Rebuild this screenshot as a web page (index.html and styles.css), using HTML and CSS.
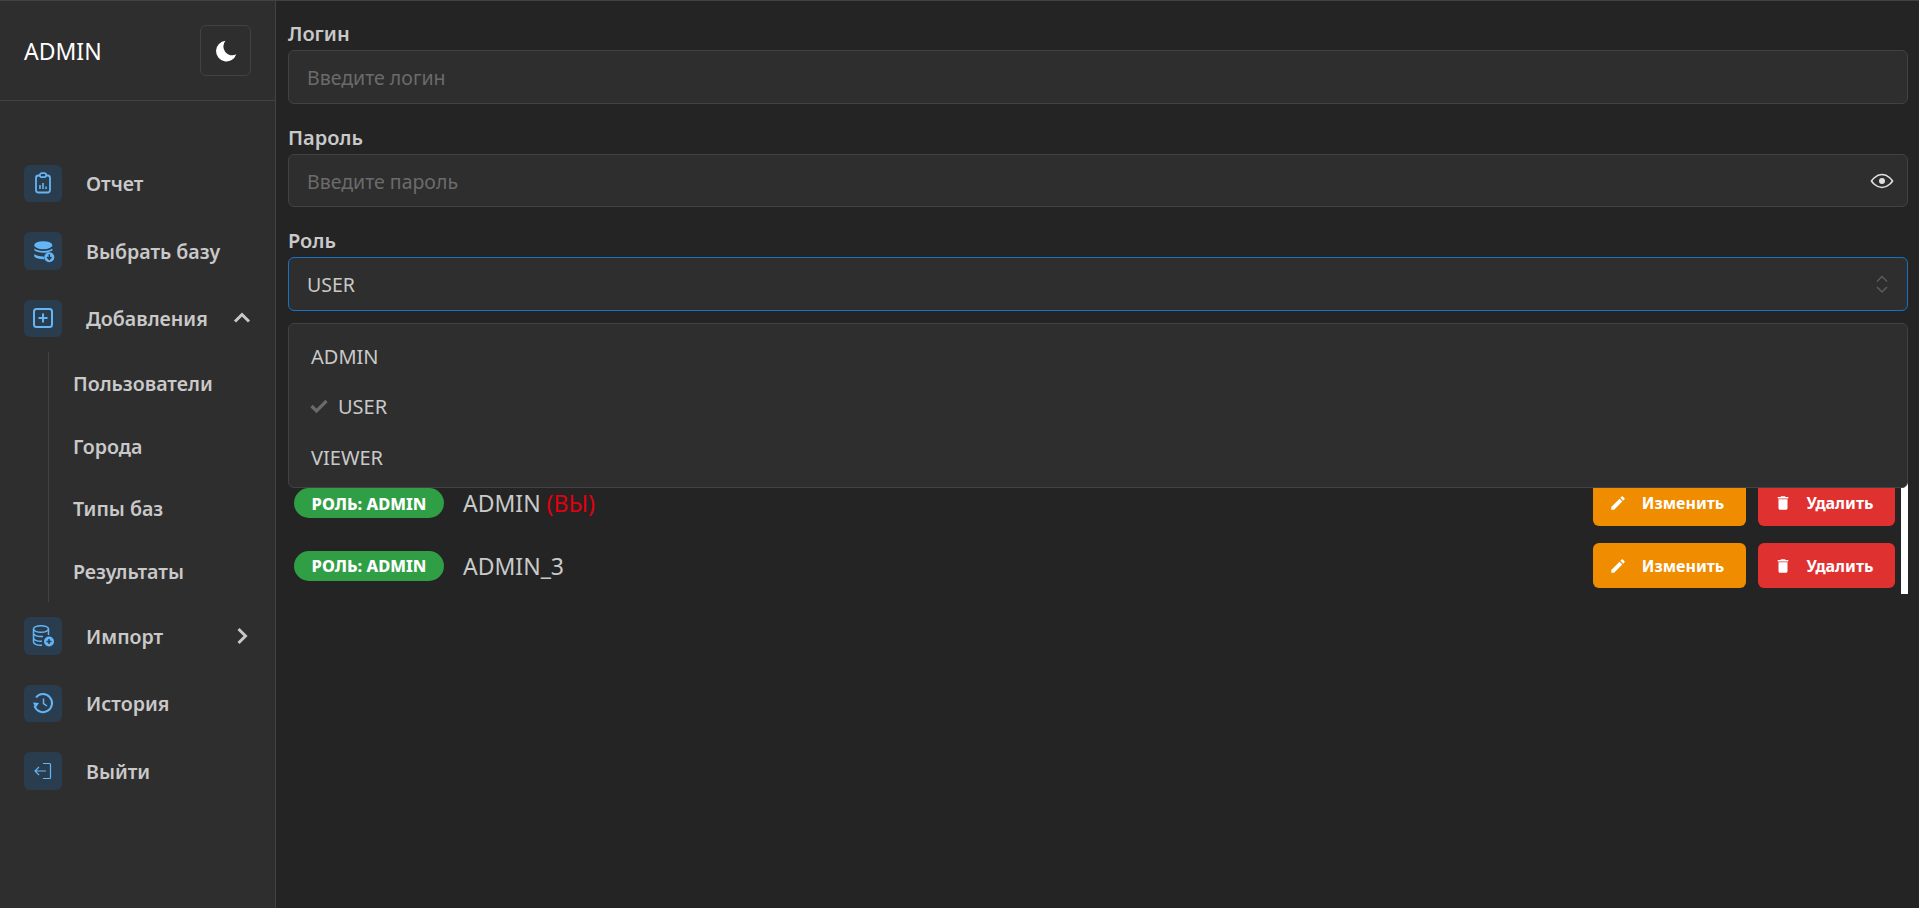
FILE: index.html
```html
<!DOCTYPE html>
<html lang="ru">
<head>
  <meta charset="UTF-8">
  <meta name="viewport" content="width=device-width, initial-scale=1.0">
  <title>Пользователи</title>
  <link rel="stylesheet" href="styles.css">
</head>
<body>
  <aside class="sidebar">
    <div class="sidebar-head">
      <span class="brand">ADMIN</span>
      <button class="theme-btn" aria-label="Тема">
        <svg width="26" height="26" viewBox="0 0 24 24" fill="#fff"><path d="M11.500 2.500a9.600 9.600 0 1 0 10 12.600 8.200 8.200 0 0 1-10-12.600z"/></svg>
      </button>
    </div>

    <nav class="nav">
      <a class="nav-item">
        <span class="nav-icon">
          <svg width="24" height="24" viewBox="0 0 24 24" fill="none" stroke="#64b5f6" stroke-width="1.800" stroke-linejoin="round"><rect x="5" y="4.500" width="14" height="17" rx="2.500"/><rect x="8.800" y="2.200" width="6.400" height="4" rx="2" fill="#2a3d4f"/><path d="M9 18v-4M12 18v-6M15 18v-2.500" stroke-width="1.600"/></svg>
        </span>
        <span class="nav-text">Отчет</span>
      </a>
      <a class="nav-item">
        <span class="nav-icon">
          <svg width="24" height="24" viewBox="0 0 24 24" fill="#64b5f6"><ellipse cx="12.300" cy="6.200" rx="9" ry="4"/><path d="M3.300 9.500c1.600 1.600 5 2.500 9 2.500s7.400-.9 9-2.500v2.200a7 7 0 0 0-4 1.500c-1.500.4-3.200.6-5 .6-4 0-7.400-1-9-2.500z"/><path d="M3.300 15c1.600 1.500 5 2.500 9 2.500h.4c.1 1 .4 1.900.9 2.700l-1.300.1c-4 0-7.400-1-9-2.700z"/><circle cx="18.300" cy="18.200" r="5"/><path d="M18.300 15.200v5M16.100 18l2.200 2.300 2.200-2.300" fill="none" stroke="#2a3d4f" stroke-width="1.500"/></svg>
        </span>
        <span class="nav-text">Выбрать базу</span>
      </a>
      <a class="nav-item">
        <span class="nav-icon">
          <svg width="24" height="24" viewBox="0 0 24 24" fill="none" stroke="#64b5f6" stroke-width="2"><rect x="3" y="3" width="18" height="18" rx="2.500"/><path d="M12 7.500v9M7.500 12h9"/></svg>
        </span>
        <span class="nav-text">Добавления</span>
        <svg class="nav-arrow" width="18" height="18" viewBox="0 0 18 18" fill="none" stroke="#c8c8c8" stroke-width="3"><path d="M2 12.500l7-7 7 7"/></svg>
      </a>
      <div class="subnav">
        <a class="subnav-item">Пользователи</a>
        <a class="subnav-item">Города</a>
        <a class="subnav-item">Типы баз</a>
        <a class="subnav-item">Результаты</a>
      </div>
      <a class="nav-item">
        <span class="nav-icon">
          <svg width="24" height="24" viewBox="0 0 24 24" fill="none" stroke="#64b5f6" stroke-width="1.500"><ellipse cx="10" cy="5" rx="7.500" ry="3.300"/><path d="M2.500 5v13c0 1.800 3.400 3.300 7.500 3.300h1M17.500 5v6M2.500 9.300c0 1.800 3.400 3.300 7.500 3.300h2M2.500 14c0 1.800 3.400 3.300 7.500 3.300h1"/><circle cx="18" cy="17.500" r="5" fill="#64b5f6" stroke="none"/><path d="M18 15v5M15.500 17.500h5" stroke="#2a3d4f" stroke-width="1.500"/></svg>
        </span>
        <span class="nav-text">Импорт</span>
        <svg class="nav-arrow" width="18" height="18" viewBox="0 0 18 18" fill="none" stroke="#c8c8c8" stroke-width="3"><path d="M5.500 2l7 7-7 7"/></svg>
      </a>
      <a class="nav-item">
        <span class="nav-icon">
          <svg width="24" height="24" viewBox="0 0 24 24" fill="none" stroke="#64b5f6" stroke-width="2"><path d="M5 6.500A9 9 0 1 1 3.500 15"/><path d="M12.500 7.500v5l3.500 2.500" stroke-width="1.500"/><path d="M2 11.500l6 .5-3.500 5z" fill="#64b5f6" stroke="none"/></svg>
        </span>
        <span class="nav-text">История</span>
      </a>
      <a class="nav-item">
        <span class="nav-icon">
          <svg width="20" height="20" viewBox="0 0 20 20" fill="none" stroke="#64b5f6" stroke-width="1.200"><path d="M10 2.500h6.500a1 1 0 0 1 1 1v13a1 1 0 0 1-1 1H10M13 10H2M6 6l-4 4 4 4"/></svg>
        </span>
        <span class="nav-text">Выйти</span>
      </a>
    </nav>
  </aside>

  <main class="content">
    <div class="field">
      <label class="field-label" for="login">Логин</label>
      <input class="field-input" id="login" type="text" placeholder="Введите логин">
    </div>
    <div class="field">
      <label class="field-label" for="pass">Пароль</label>
      <div class="field-wrap">
        <input class="field-input" id="pass" type="password" placeholder="Введите пароль">
        <svg class="field-icon" width="24" height="24" viewBox="0 0 24 24" fill="none" stroke="#e0e0e0" stroke-width="1.600"><path d="M1.500 12S5.500 5.500 12 5.500 22.500 12 22.500 12 18.500 18.500 12 18.500 1.500 12 1.500 12z"/><circle cx="12" cy="12" r="3" fill="#e0e0e0" stroke="none"/></svg>
      </div>
    </div>
    <div class="field">
      <label class="field-label" for="role">Роль</label>
      <div class="field-wrap">
        <input class="field-input field-input-active" id="role" type="text" value="USER" readonly>
        <svg class="field-icon" width="24" height="24" viewBox="0 0 24 24" fill="none" stroke="#5c5c5c" stroke-width="1.500"><path d="M7 9.500l5-5 5 5M7 15l5 5 5-5"/></svg>
        <ul class="dropdown">
          <li class="dropdown-item">ADMIN</li>
          <li class="dropdown-item">
            <svg class="dropdown-check" width="18" height="18" viewBox="0 0 18 18" fill="none" stroke="#6a6a6a" stroke-width="3.200"><path d="M1.500 9l5 5L16.500 4"/></svg>
            USER
          </li>
          <li class="dropdown-item">VIEWER</li>
        </ul>
      </div>
    </div>

    <div class="user-list">
      <div class="user-row">
        <span class="role-badge">Роль: ADMIN</span>
        <span class="user-name">ADMIN <span class="user-self">(ВЫ)</span></span>
        <div class="user-actions">
          <button class="btn btn-edit">
            <svg width="18" height="18" viewBox="0 0 24 24" fill="#fff"><path d="M3 17.250V21h3.750L17.810 9.940l-3.750-3.750L3 17.250zM20.710 7.040c.390-.390.390-1.020 0-1.410l-2.340-2.340c-.390-.390-1.020-.390-1.410 0l-1.830 1.830 3.750 3.750 1.830-1.830z"/></svg>
            Изменить
          </button>
          <button class="btn btn-delete">
            <svg width="18" height="18" viewBox="0 0 24 24" fill="#fff"><path d="M6 19c0 1.100.9 2 2 2h8c1.100 0 2-.9 2-2V7H6v12zM19 4h-3.500l-1-1h-5l-1 1H5v2h14V4z"/></svg>
            Удалить
          </button>
        </div>
      </div>
      <div class="user-row">
        <span class="role-badge">Роль: ADMIN</span>
        <span class="user-name">ADMIN_3</span>
        <div class="user-actions">
          <button class="btn btn-edit">
            <svg width="18" height="18" viewBox="0 0 24 24" fill="#fff"><path d="M3 17.250V21h3.750L17.810 9.940l-3.750-3.750L3 17.250zM20.710 7.040c.390-.390.390-1.020 0-1.410l-2.340-2.340c-.390-.390-1.020-.390-1.410 0l-1.830 1.830 3.750 3.750 1.830-1.830z"/></svg>
            Изменить
          </button>
          <button class="btn btn-delete">
            <svg width="18" height="18" viewBox="0 0 24 24" fill="#fff"><path d="M6 19c0 1.100.9 2 2 2h8c1.100 0 2-.9 2-2V7H6v12zM19 4h-3.500l-1-1h-5l-1 1H5v2h14V4z"/></svg>
            Удалить
          </button>
        </div>
      </div>
    </div>
  </main>
</body>
</html>
```

FILE: styles.css
```css
* {
  margin: 0;
  padding: 0;
  box-sizing: border-box;
}

body {
  font-family: "Noto Sans", "Open Sans", sans-serif;
  height: 100vh;
  display: flex;
  background-color: #242424;
  color: #c9c9c9;
  border-top: 1px solid #424242;
  overflow: hidden;
}

/* Sidebar */
.sidebar {
  width: 276px;
  flex-shrink: 0;
  background-color: #2e2e2e;
  border-right: 1px solid #424242;
}

.sidebar-head {
  height: 100px;
  padding: 0 24px;
  display: flex;
  justify-content: space-between;
  align-items: center;
  border-bottom: 1px solid #424242;
}

.brand {
  font-size: 23px;
  color: #fff;
}

.theme-btn {
  width: 51px;
  height: 51px;
  display: flex;
  justify-content: center;
  align-items: center;
  background: none;
  border: 1px solid #424242;
  border-radius: 6px;
}

.nav {
  padding-top: 48.5px;
}

.nav-item {
  height: 67.5px;
  padding: 0 24px;
  display: flex;
  align-items: center;
  gap: 24px;
}

.nav-icon {
  width: 38px;
  height: 37.5px;
  display: flex;
  justify-content: center;
  align-items: center;
  flex-shrink: 0;
  background-color: #2a3d4f;
  border-radius: 6px;
}

.nav-text {
  padding-top: 1px;
  font-size: 19.6px;
  font-weight: 600;
  flex: 1;
}

.nav-arrow {
  flex-shrink: 0;
}

.subnav {
  margin-left: 48px;
  padding-left: 24px;
  border-left: 1px solid #424242;
}

.subnav-item {
  height: 62.5px;
  padding-top: 1px;
  display: flex;
  align-items: center;
  font-size: 19.6px;
  font-weight: 600;
}

/* Form */
.content {
  flex: 1;
  padding: 21px 11px 0 12px;
}

.field {
  margin-bottom: 22px;
}

.field-label {
  display: block;
  height: 28px;
  font-size: 20px;
  font-weight: 600;
  line-height: 24px;
}

.field-wrap {
  position: relative;
}

.field-input {
  display: block;
  width: 100%;
  height: 53.5px;
  padding: 2px 18px 0;
  font-family: inherit;
  font-size: 19.5px;
  color: #c9c9c9;
  background-color: #2e2e2e;
  border: 1px solid #424242;
  border-radius: 6px;
  outline: none;
}

.field-input::placeholder {
  color: #6b6b6b;
}

.field-input-active {
  border-color: #1971c2;
}

.field-icon {
  position: absolute;
  right: 14px;
  top: 15px;
}

.dropdown {
  position: absolute;
  z-index: 1;
  left: 0;
  right: 0;
  top: 66px;
  height: 165px;
  padding: 7px 0;
  list-style: none;
  background-color: #2e2e2e;
  border: 1px solid #424242;
  border-radius: 6px;
}

.dropdown-item {
  height: 50.5px;
  padding: 0 22px;
  display: flex;
  align-items: center;
  gap: 10px;
  font-size: 20px;
}

.dropdown-check {
  margin: -2px 0 0 -1px;
}

/* Users */
.user-list {
  margin-top: 170px;
  padding: 0 6px 6px;
  display: flex;
  flex-direction: column;
  gap: 17.5px;
  border-right: 7px solid #fff;
}

.user-row {
  height: 45px;
  display: flex;
  align-items: center;
}

.role-badge {
  width: 150px;
  height: 30px;
  display: flex;
  justify-content: center;
  align-items: center;
  font-size: 16.5px;
  font-weight: 800;
  color: #fff;
  text-transform: uppercase;
  background-color: #2f9e44;
  border-radius: 15px;
}

.user-name {
  margin-left: 19px;
  font-size: 23px;
}

.user-self {
  color: #e0000f;
}

.user-actions {
  margin-left: auto;
  display: flex;
  gap: 12px;
}

.btn {
  height: 45px;
  padding-right: 6px;
  display: flex;
  align-items: center;
  justify-content: center;
  gap: 15px;
  font-family: inherit;
  font-size: 16px;
  font-weight: 700;
  color: #fff;
  border: none;
  border-radius: 6px;
}

.btn-edit {
  width: 153px;
  background-color: #f08c00;
}

.btn-delete {
  width: 137px;
  background-color: #e03131;
}
```
